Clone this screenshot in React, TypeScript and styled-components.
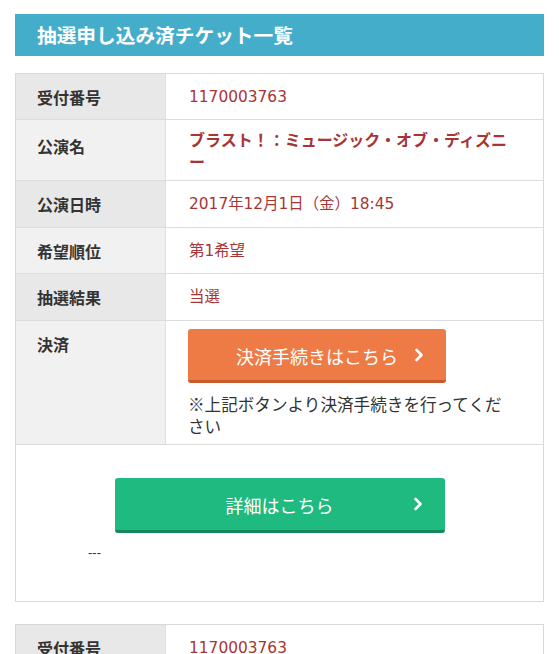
import React from "react";
import styled, { createGlobalStyle } from "styled-components";

const Global = createGlobalStyle`
  html, body { margin: 0; padding: 0; background: #fff; }
  body {
    font-family: "Noto Sans CJK JP", "Noto Sans", sans-serif;
    color: #333;
    font-size: 16px;
  }
`;

const Page = styled.div`
  padding: 14px 15px 0 15px;
  width: 529px;
`;

const Heading = styled.h2`
  margin: 0 0 17px;
  height: 42px;
  background: #43adca;
  color: #fff;
  font-size: 19.7px;
  font-weight: 700;
  line-height: 42px;
  padding: 0 22px;
`;

const Card = styled.section`
  border: 1px solid #d9d9d9;
  margin-bottom: 22px;
  background: #fff;
`;

const Row = styled.div`
  display: grid;
  grid-template-columns: 150px 1fr;
  border-bottom: 1px solid #dcdcdc;
`;

const Label = styled.div<{ $shade: boolean; $top?: number }>`
  background: ${(p) => (p.$shade ? "#e8e8e8" : "#f1f1f1")};
  border-right: 1px solid #e0e0e0;
  padding: ${(p) => p.$top ?? 12}px 16px 11px 21px;
  font-weight: 700;
  line-height: 22px;
  color: #333;
`;

const Value = styled.div<{ $pad?: string }>`
  padding: ${(p) => p.$pad ?? "12px 32px 11px 23px"};
  line-height: 22px;
  color: #a83535;
`;

const Plain = styled.div`
  height: 22px;
  line-height: 22px;
  font-family: "DejaVu Sans", "Noto Sans CJK JP", sans-serif;
  font-size: 15.4px;
  white-space: nowrap;
`;

const Title = styled.div`
  line-height: 22px;
  font-family: "Noto Sans CJK JP", sans-serif;
  font-size: 16px;
  font-weight: 700;
`;

const Note = styled.p`
  margin: 10px 0 0;
  color: #333;
  line-height: 22px;
  font-family: "Noto Sans CJK JP", sans-serif;
  font-size: 16.6px;
`;

const Button = styled.a<{ $bg: string; $edge: string; $w: number; $h: number }>`
  position: relative;
  display: flex;
  align-items: center;
  justify-content: center;
  box-sizing: border-box;
  width: ${(p) => p.$w}px;
  height: ${(p) => p.$h}px;
  background: ${(p) => p.$bg};
  border-bottom: 3px solid ${(p) => p.$edge};
  border-radius: 3px;
  color: #fff;
  font-family: "Noto Sans CJK JP", sans-serif;
  font-size: 18px;
  text-decoration: none;
  padding-top: 2px;
`;

const Chevron = styled.svg`
  position: absolute;
  right: 22px;
  top: 50%;
  margin-top: -7px;
`;

const Footer = styled.div`
  box-sizing: border-box;
  padding: 33px 0 0;
  display: flex;
  flex-direction: column;
  align-items: center;
  height: 156px;
`;

const Dashes = styled.div`
  align-self: flex-start;
  margin: 12px 0 0 72px;
  font-size: 13px;
  color: #333;
  font-family: "Liberation Sans", sans-serif;
`;

const Arrow = () => (
  <Chevron width="10" height="14" viewBox="0 0 10 14">
    <path d="M2.5 2 L7.5 7 L2.5 12" fill="none" stroke="#fff" strokeWidth="2.6" strokeLinecap="round" strokeLinejoin="round" />
  </Chevron>
);

export default function App() {
  return (
    <Page>
      <Global />
      <Heading>抽選申し込み済チケット一覧</Heading>
      <Card>
        <Row>
          <Label $shade>受付番号</Label>
          <Value><Plain>1170003763</Plain></Value>
        </Row>
        <Row>
          <Label $shade={false} $top={15}>公演名</Label>
          <Value $pad="8px 32px 8px 23px">
            <Title>ブラスト！：ミュージック・オブ・ディズニー</Title>
          </Value>
        </Row>
        <Row>
          <Label $shade>公演日時</Label>
          <Value $pad="12px 32px 12px 23px"><Plain>2017年12月1日（金）18:45</Plain></Value>
        </Row>
        <Row>
          <Label $shade={false}>希望順位</Label>
          <Value><Plain>第1希望</Plain></Value>
        </Row>
        <Row>
          <Label $shade>抽選結果</Label>
          <Value $pad="12px 32px 12px 23px"><Plain>当選</Plain></Value>
        </Row>
        <Row>
          <Label $shade={false}>決済</Label>
          <Value $pad="8px 32px 7px 22px">
            <Button $bg="#ee7b46" $edge="#c85b29" $w={258} $h={54}>
              決済手続きはこちら
              <Arrow />
            </Button>
            <Note>※上記ボタンより決済手続きを行ってください</Note>
          </Value>
        </Row>
        <Footer>
          <Button $bg="#1fba80" $edge="#15875d" $w={330} $h={55}>
            詳細はこちら
            <Arrow />
          </Button>
          <Dashes>---</Dashes>
        </Footer>
      </Card>
      <Card>
        <Row>
          <Label $shade>受付番号</Label>
          <Value><Plain>1170003763</Plain></Value>
        </Row>
      </Card>
    </Page>
  );
}
